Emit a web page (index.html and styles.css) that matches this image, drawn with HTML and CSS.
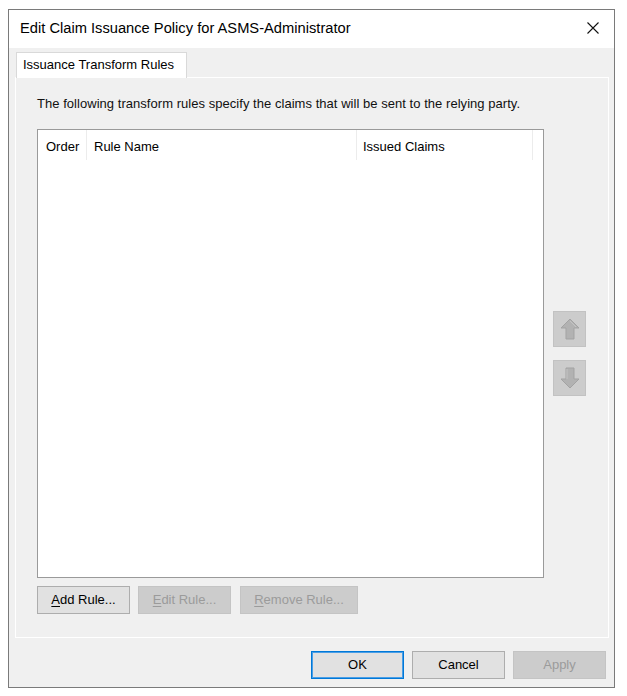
FILE: index.html
```html
<!DOCTYPE html>
<html>
<head>
<meta charset="utf-8">
<link rel="stylesheet" href="styles.css">
</head>
<body>
<div class="window">
  <div class="titlebar">
    <span class="title">Edit Claim Issuance Policy for ASMS-Administrator</span>
    <svg class="close" width="12" height="12" viewBox="0 0 12 12"><path d="M0.5 0.5 L11.5 11.5 M11.5 0.5 L0.5 11.5" stroke="#111" stroke-width="1.1" fill="none"/></svg>
  </div>
  <div class="body">
    <div class="tabs"><div class="tab">Issuance Transform Rules</div></div>
    <div class="panel">
      <p class="desc">The following transform rules specify the claims that will be sent to the relying party.</p>
      <div class="list-row">
        <div class="list">
          <div class="list-header">
            <div class="col col-order">Order</div>
            <div class="col col-name">Rule Name</div>
            <div class="col col-claims">Issued Claims</div>
          </div>
        </div>
        <div class="move-buttons">
          <div class="btn-move">
            <svg width="20" height="22" viewBox="0 0 20 22"><path d="M10 1 L19 10 L14 10 L14 21 L6 21 L6 10 L1 10 Z" fill="#b2b2b2" stroke="#a3a3a3" stroke-width="1"/><path d="M10 3 L16 9" stroke="#c4c4c4" stroke-width="1"/></svg>
          </div>
          <div class="btn-move">
            <svg width="20" height="22" viewBox="0 0 20 22"><path d="M10 21 L19 12 L14 12 L14 1 L6 1 L6 12 L1 12 Z" fill="#b2b2b2" stroke="#a3a3a3" stroke-width="1"/><path d="M7 2 L7 12" stroke="#c4c4c4" stroke-width="1"/></svg>
          </div>
        </div>
      </div>
      <div class="rule-buttons">
        <div class="btn btn-add"><u>A</u>dd Rule...</div>
        <div class="btn btn-edit disabled"><u>E</u>dit Rule...</div>
        <div class="btn btn-remove disabled"><u>R</u>emove Rule...</div>
      </div>
    </div>
    <div class="footer">
      <div class="btn btn-default">OK</div>
      <div class="btn">Cancel</div>
      <div class="btn disabled">Apply</div>
    </div>
  </div>
</div>
</body>
</html>
```

FILE: styles.css
```css
html, body {
  margin: 0;
  padding: 0;
  background: #ffffff;
}
body {
  font-family: "Liberation Sans", Arial, sans-serif;
  color: #000;
}
.window {
  box-sizing: border-box;
  width: 607px;
  height: 679px;
  margin: 9px 0 0 8px;
  border: 1px solid #7a7a7a;
  background: #f0f0f0;
  display: flex;
  flex-direction: column;
}
.titlebar {
  height: 38px;
  background: #ffffff;
  display: flex;
  align-items: center;
  justify-content: space-between;
  padding-left: 11px;
  padding-right: 15px;
  padding-bottom: 2px;
  box-sizing: border-box;
  flex: none;
}
.title {
  font-size: 14.7px;
  color: #000;
}
.close {
  display: block;
}
.body {
  flex: 1;
  padding: 4px 5px 0 6px;
  display: flex;
  flex-direction: column;
}
.tabs {
  display: flex;
  height: 25px;
}
.tab {
  box-sizing: border-box;
  width: 171px;
  height: 26px;
  margin-left: 1px;
  background: #ffffff;
  border: 1px solid #d9d9d9;
  border-bottom: none;
  font-size: 13px;
  line-height: 23px;
  padding-left: 6px;
  position: relative;
  z-index: 1;
}
.panel {
  box-sizing: border-box;
  width: 594px;
  height: 561px;
  border: 1px solid #ffffff;
  background: #f0f0f0;
  padding: 18px 22px 23px 21px;
}
.desc {
  margin: 0 0 18px;
  font-size: 13px;
  line-height: 15px;
  letter-spacing: 0.04px;
  color: #111;
}
.list-row {
  display: flex;
  align-items: center;
  gap: 9px;
}
.list {
  box-sizing: border-box;
  width: 507px;
  height: 449px;
  border: 1px solid #9a9a9a;
  background: #ffffff;
}
.list-header {
  display: flex;
  height: 30px;
}
.col {
  box-sizing: border-box;
  height: 30px;
  font-size: 13px;
  line-height: 16px;
  padding-top: 9px;
  border-right: 1px solid #ececec;
}
.col-order {
  width: 49px;
  padding-left: 8px;
}
.col-name {
  width: 270px;
  padding-left: 7px;
}
.col-claims {
  width: 176px;
  padding-left: 6px;
}
.move-buttons {
  display: flex;
  flex-direction: column;
  gap: 13px;
}
.btn-move {
  box-sizing: border-box;
  width: 33px;
  height: 36px;
  background: #cccccc;
  border: 1px solid #c2c2c2;
  display: flex;
  align-items: center;
  justify-content: center;
}
.rule-buttons {
  display: flex;
  gap: 8px;
  margin-top: 8px;
}
.btn {
  box-sizing: border-box;
  width: 93px;
  height: 28px;
  background: #e1e1e1;
  border: 1px solid #adadad;
  font-size: 13px;
  line-height: 26px;
  text-align: center;
  color: #000;
}
.btn u {
  text-decoration-thickness: 1px;
  text-underline-offset: 2px;
}
.btn-remove {
  width: 118px;
  margin-left: 1px;
}
.btn.disabled {
  background: #cccccc;
  border-color: #c4c4c4;
  color: #9b9b9b;
}
.btn-default {
  border: 1px solid #0078d7;
  box-shadow: inset 0 0 0 1px #4a9ee6;
}
.footer {
  display: flex;
  justify-content: flex-end;
  gap: 8px;
  padding-top: 13px;
  padding-right: 3px;
}
```
